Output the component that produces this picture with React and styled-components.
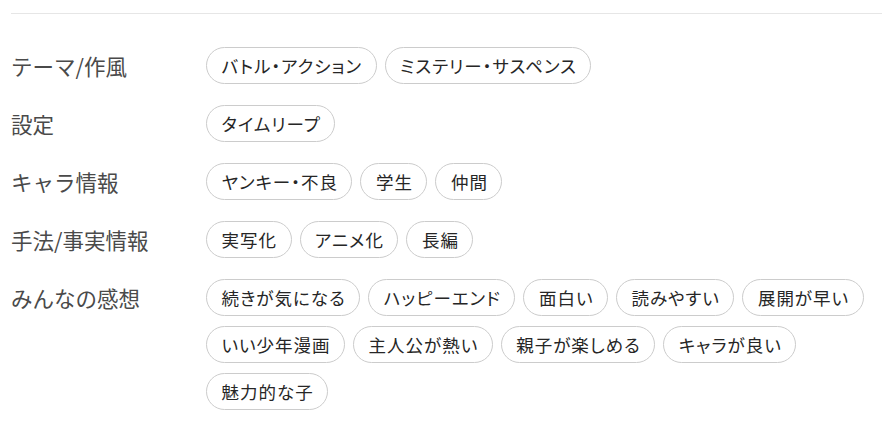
import styled, { createGlobalStyle } from "styled-components";

const GlobalStyle = createGlobalStyle`
    * {
        box-sizing: border-box;
    }
    body {
        margin: 0;
        background: #ffffff;
        font-family: "Noto Sans CJK JP", "Noto Sans", sans-serif;
    }
`

const tagGroups = [
    { label: 'テーマ/作風', tags: ['バトル・アクション', 'ミステリー・サスペンス'] },
    { label: '設定', tags: ['タイムリープ'] },
    { label: 'キャラ情報', tags: ['ヤンキー・不良', '学生', '仲間'] },
    { label: '手法/事実情報', tags: ['実写化', 'アニメ化', '長編'] },
    {
        label: 'みんなの感想',
        tags: [
            '続きが気になる', 'ハッピーエンド', '面白い', '読みやすい', '展開が早い',
            'いい少年漫画', '主人公が熱い', '親子が楽しめる', 'キャラが良い',
            '魅力的な子',
        ],
    },
]

function App() {
    return (
        <>
            <GlobalStyle />
            <Wrapper>
                <Divider />
                <Groups>
                    {tagGroups.map(group => (
                        <TagRow key={group.label}>
                            <Label>{group.label}</Label>
                            <TagList>
                                {group.tags.map(tag => (
                                    <Tag key={tag}>{tag}</Tag>
                                ))}
                            </TagList>
                        </TagRow>
                    ))}
                </Groups>
            </Wrapper>
        </>
    )
}

export default App

const Wrapper = styled.div`
    padding: 13px 0 0 11px;
`
const Divider = styled.hr`
    margin: 0;
    border: none;
    border-top: 1px solid #e6e6e6;
`
const Groups = styled.div`
    display: flex;
    flex-direction: column;
    gap: 21px;
    padding-top: 33px;
`
const TagRow = styled.div`
    display: grid;
    grid-template-columns: 195px 1fr;
    align-items: start;
`
const Label = styled.h3`
    margin: 0;
    font-size: 21.5px;
    font-weight: 400;
    line-height: 37px;
    color: #4a4a4a;
    white-space: nowrap;
`
const TagList = styled.div`
    display: flex;
    flex-wrap: wrap;
    gap: 10px 8px;
`
const Tag = styled.span`
    display: inline-flex;
    align-items: center;
    height: 37px;
    padding: 0 13.5px 0 14.5px;
    border: 1px solid #cccccc;
    border-radius: 999px;
    font-size: 17.5px;
    font-feature-settings: "palt";
    letter-spacing: 1px;
    color: #262626;
    white-space: nowrap;
`
